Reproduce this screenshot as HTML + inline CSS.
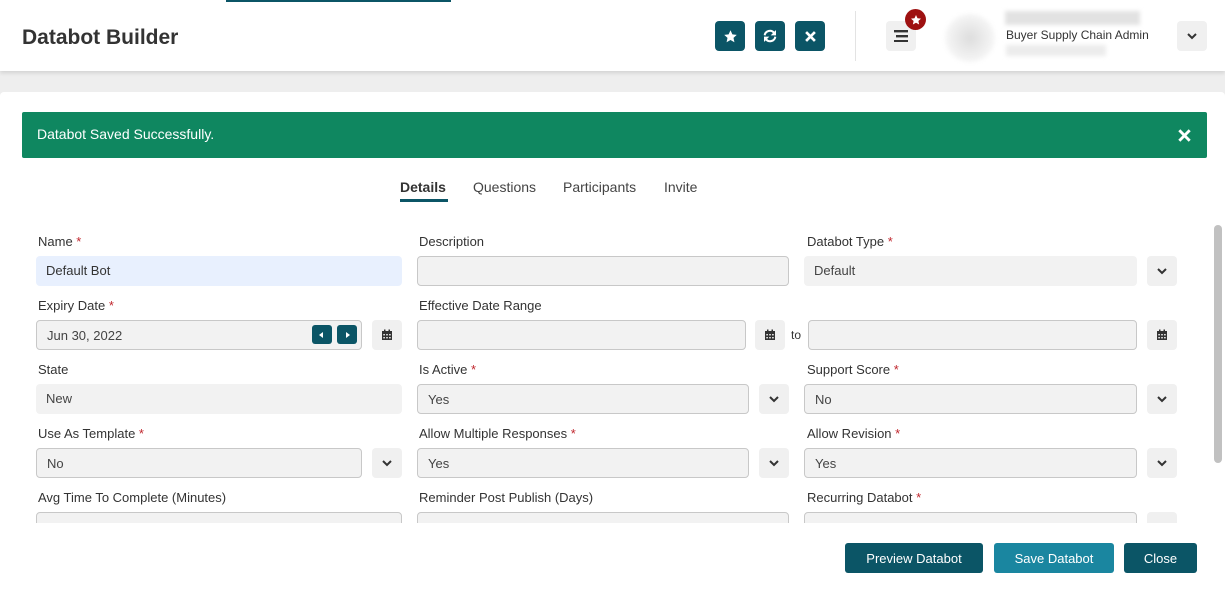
<!DOCTYPE html>
<html><head><style>
*{box-sizing:border-box;margin:0;padding:0}
body{width:1225px;height:591px;overflow:hidden;background:#eeeeee;font-family:"Liberation Sans",sans-serif;color:#333;position:relative;font-size:13px}
.hdr{position:absolute;left:0;top:0;width:1225px;height:71px;background:#fff;box-shadow:0 2px 4px rgba(0,0,0,.12)}
.topline{position:absolute;left:226px;top:0;width:225px;height:2px;background:#0b5566}
h1{position:absolute;left:22px;top:26px;font-size:21px;font-weight:bold;color:#333}
.ib{position:absolute;top:21px;width:30px;height:30px;border-radius:4px;background:#0b5566;color:#fff;display:flex;align-items:center;justify-content:center}
.gb{position:absolute;width:30px;height:30px;border-radius:4px;background:#f0f0f0;display:flex;align-items:center;justify-content:center}
.card{position:absolute;left:0;top:92px;width:1225px;height:499px;background:#fff;border-radius:4px 4px 0 0}
.alert{position:absolute;left:22px;top:112px;width:1185px;height:46px;background:#0f8760;border-radius:2px;color:#fff;font-size:14px;padding:14px 15px}
.tabs{position:absolute;top:179px;font-size:14px;color:#444}
.lbl{position:absolute;font-size:13px;color:#333}
.lbl b{color:#c0262d;font-weight:normal}
.in{position:absolute;height:30px;border-radius:4px;background:#f2f2f2;border:1px solid #c8c8c8;padding:7px 10px;font-size:13px;color:#444}
.nb{border:none}
.btn{position:absolute;top:543px;height:30px;border-radius:3px;color:#fff;font-size:13px;display:flex;align-items:center;justify-content:center}
.chev{width:10px;height:10px}
</style></head><body>
<div class="hdr"></div><div class="topline"></div>
<h1>Databot Builder</h1>
<div class="ib" style="left:715px"><svg width="15" height="15" viewBox="0 0 24 24"><path fill="#fff" d="M12 2l3 6.5 7 .8-5.2 4.8 1.5 7L12 17.6 5.7 21.1l1.5-7L2 9.3l7-.8z"/></svg></div>
<div class="ib" style="left:755px"><svg width="16" height="16" viewBox="0 0 24 24" fill="none" stroke="#fff" stroke-width="3"><path d="M4 11a8 8 0 0 1 14-4l2 2M20 13a8 8 0 0 1-14 4l-2-2"/><path fill="#fff" stroke="none" d="M21 3v8h-8zM3 21v-8h8z"/></svg></div>
<div class="ib" style="left:795px"><svg width="11" height="11" viewBox="0 0 10 10" stroke="#fff" stroke-width="2.4"><path d="M1 1l8 8M9 1l-8 8"/></svg></div>
<div style="position:absolute;left:855px;top:11px;width:1px;height:50px;background:#e3e3e3"></div>
<div class="gb" style="left:886px;top:21px"><svg width="14" height="12"><rect y="0" width="14" height="2.4" fill="#333"/><rect x="2" y="5" width="12" height="2.4" fill="#333"/><rect y="10" width="14" height="2.4" fill="#333"/></svg></div>
<div style="position:absolute;left:905px;top:9px;width:21px;height:21px;border-radius:50%;background:#9e1111;display:flex;align-items:center;justify-content:center"><svg width="12" height="12" viewBox="0 0 24 24"><path fill="#fff" d="M12 2l3 6.5 7 .8-5.2 4.8 1.5 7L12 17.6 5.7 21.1l1.5-7L2 9.3l7-.8z"/></svg></div>
<div style="position:absolute;left:945px;top:14px;width:50px;height:48px;border-radius:50%;background:radial-gradient(circle,#ddd,#f6f6f6 70%);filter:blur(2px)"></div>
<div style="position:absolute;left:1005px;top:11px;width:135px;height:14px;background:#e2e2e2;filter:blur(2px)"></div>
<div style="position:absolute;left:1006px;top:28px;font-size:12px;color:#333">Buyer Supply Chain Admin</div>
<div style="position:absolute;left:1006px;top:45px;width:100px;height:11px;background:#ececec;filter:blur(2px)"></div>
<div class="gb" style="left:1177px;top:21px"><svg class="chev" viewBox="0 0 10 10"><path d="M1 3l4 4 4-4" stroke="#333" stroke-width="2" fill="none"/></svg></div>
<div class="card"></div>
<div class="alert">Databot Saved Successfully.<svg style="position:absolute;right:16px;top:17px" width="13" height="13" viewBox="0 0 10 10" stroke="#fff" stroke-width="2.2"><path d="M1 1l8 8M9 1l-8 8"/></svg></div>
<div class="tabs" style="left:400px;font-weight:bold;color:#333">Details</div>
<div style="position:absolute;left:400px;top:199px;width:48px;height:3px;background:#0b5566"></div>
<div class="tabs" style="left:473px">Questions</div>
<div class="tabs" style="left:563px">Participants</div>
<div class="tabs" style="left:664px">Invite</div>
<div style="position:absolute;left:1214px;top:225px;width:8px;height:238px;border-radius:4px;background:#c1c1c1"></div>
<div style="position:absolute;left:0;top:0;width:1210px;height:523px;overflow:hidden">
<div class="lbl" style="left:38px;top:234px">Name <b>*</b></div>
<div class="lbl" style="left:419px;top:234px">Description</div>
<div class="lbl" style="left:807px;top:234px">Databot Type <b>*</b></div>
<div class="in nb" style="left:36px;top:256px;width:366px;background:#e8f0fe;color:#333">Default Bot</div>
<div class="in" style="left:417px;top:256px;width:372px"></div>
<div class="in nb" style="left:804px;top:256px;width:333px">Default</div>
<div class="gb" style="left:1147px;top:256px"><svg class="chev" viewBox="0 0 10 10"><path d="M1 3l4 4 4-4" stroke="#333" stroke-width="2" fill="none"/></svg></div>

<div class="lbl" style="left:38px;top:298px">Expiry Date <b>*</b></div>
<div class="lbl" style="left:419px;top:298px">Effective Date Range</div>
<div class="in" style="left:36px;top:320px;width:326px">Jun 30, 2022</div>
<div style="position:absolute;left:312px;top:325px;width:20px;height:19px;border-radius:3px;background:#0b5566"><svg width="20" height="19"><path d="M11 7v6l-4-3z" fill="#fff"/></svg></div>
<div style="position:absolute;left:337px;top:325px;width:20px;height:19px;border-radius:3px;background:#0b5566"><svg width="20" height="19"><path d="M9 7v6l4-3z" fill="#fff"/></svg></div>
<div class="gb cal" style="left:372px;top:320px"></div>
<div class="in" style="left:417px;top:320px;width:329px"></div>
<div class="gb cal" style="left:755px;top:320px"></div>
<div class="lbl" style="left:791px;top:328px;font-size:12px">to</div>
<div class="in" style="left:808px;top:320px;width:329px"></div>
<div class="gb cal" style="left:1147px;top:320px"></div>

<div class="lbl" style="left:38px;top:362px">State</div>
<div class="lbl" style="left:419px;top:362px">Is Active <b>*</b></div>
<div class="lbl" style="left:807px;top:362px">Support Score <b>*</b></div>
<div class="in nb" style="left:36px;top:384px;width:366px">New</div>
<div class="in" style="left:417px;top:384px;width:332px">Yes</div>
<div class="gb dd" style="left:759px;top:384px"></div>
<div class="in" style="left:804px;top:384px;width:333px">No</div>
<div class="gb dd" style="left:1147px;top:384px"></div>

<div class="lbl" style="left:38px;top:426px">Use As Template <b>*</b></div>
<div class="lbl" style="left:419px;top:426px">Allow Multiple Responses <b>*</b></div>
<div class="lbl" style="left:807px;top:426px">Allow Revision <b>*</b></div>
<div class="in" style="left:36px;top:448px;width:326px">No</div>
<div class="gb dd" style="left:372px;top:448px"></div>
<div class="in" style="left:417px;top:448px;width:332px">Yes</div>
<div class="gb dd" style="left:759px;top:448px"></div>
<div class="in" style="left:804px;top:448px;width:333px">Yes</div>
<div class="gb dd" style="left:1147px;top:448px"></div>

<div class="lbl" style="left:38px;top:490px">Avg Time To Complete (Minutes)</div>
<div class="lbl" style="left:419px;top:490px">Reminder Post Publish (Days)</div>
<div class="lbl" style="left:807px;top:490px">Recurring Databot <b>*</b></div>
<div class="in" style="left:36px;top:512px;width:366px"></div>
<div class="in" style="left:417px;top:512px;width:372px"></div>
<div class="in" style="left:804px;top:512px;width:333px">No</div>
<div class="gb" style="left:1147px;top:512px"></div>
</div>
<div class="btn" style="left:845px;width:138px;background:#0b5566">Preview Databot</div>
<div class="btn" style="left:994px;width:120px;background:#1a86a0">Save Databot</div>
<div class="btn" style="left:1124px;width:73px;background:#0b5566">Close</div>
<script>
document.querySelectorAll('.cal').forEach(e=>e.innerHTML='<svg width="12" height="12" viewBox="0 0 12 12"><rect x="1" y="2" width="10" height="9" fill="#333"/><rect x="3" y="0.5" width="1.5" height="3" fill="#333"/><rect x="7.5" y="0.5" width="1.5" height="3" fill="#333"/><g fill="#f0f0f0"><rect x="2.3" y="5" width="1.6" height="1.4"/><rect x="5.2" y="5" width="1.6" height="1.4"/><rect x="8.1" y="5" width="1.6" height="1.4"/><rect x="2.3" y="8" width="1.6" height="1.4"/><rect x="5.2" y="8" width="1.6" height="1.4"/><rect x="8.1" y="8" width="1.6" height="1.4"/></g></svg>');
document.querySelectorAll('.dd').forEach(e=>e.innerHTML='<svg class="chev" viewBox="0 0 10 10"><path d="M1 3l4 4 4-4" stroke="#333" stroke-width="2" fill="none"/></svg>');
</script>
</body></html>
